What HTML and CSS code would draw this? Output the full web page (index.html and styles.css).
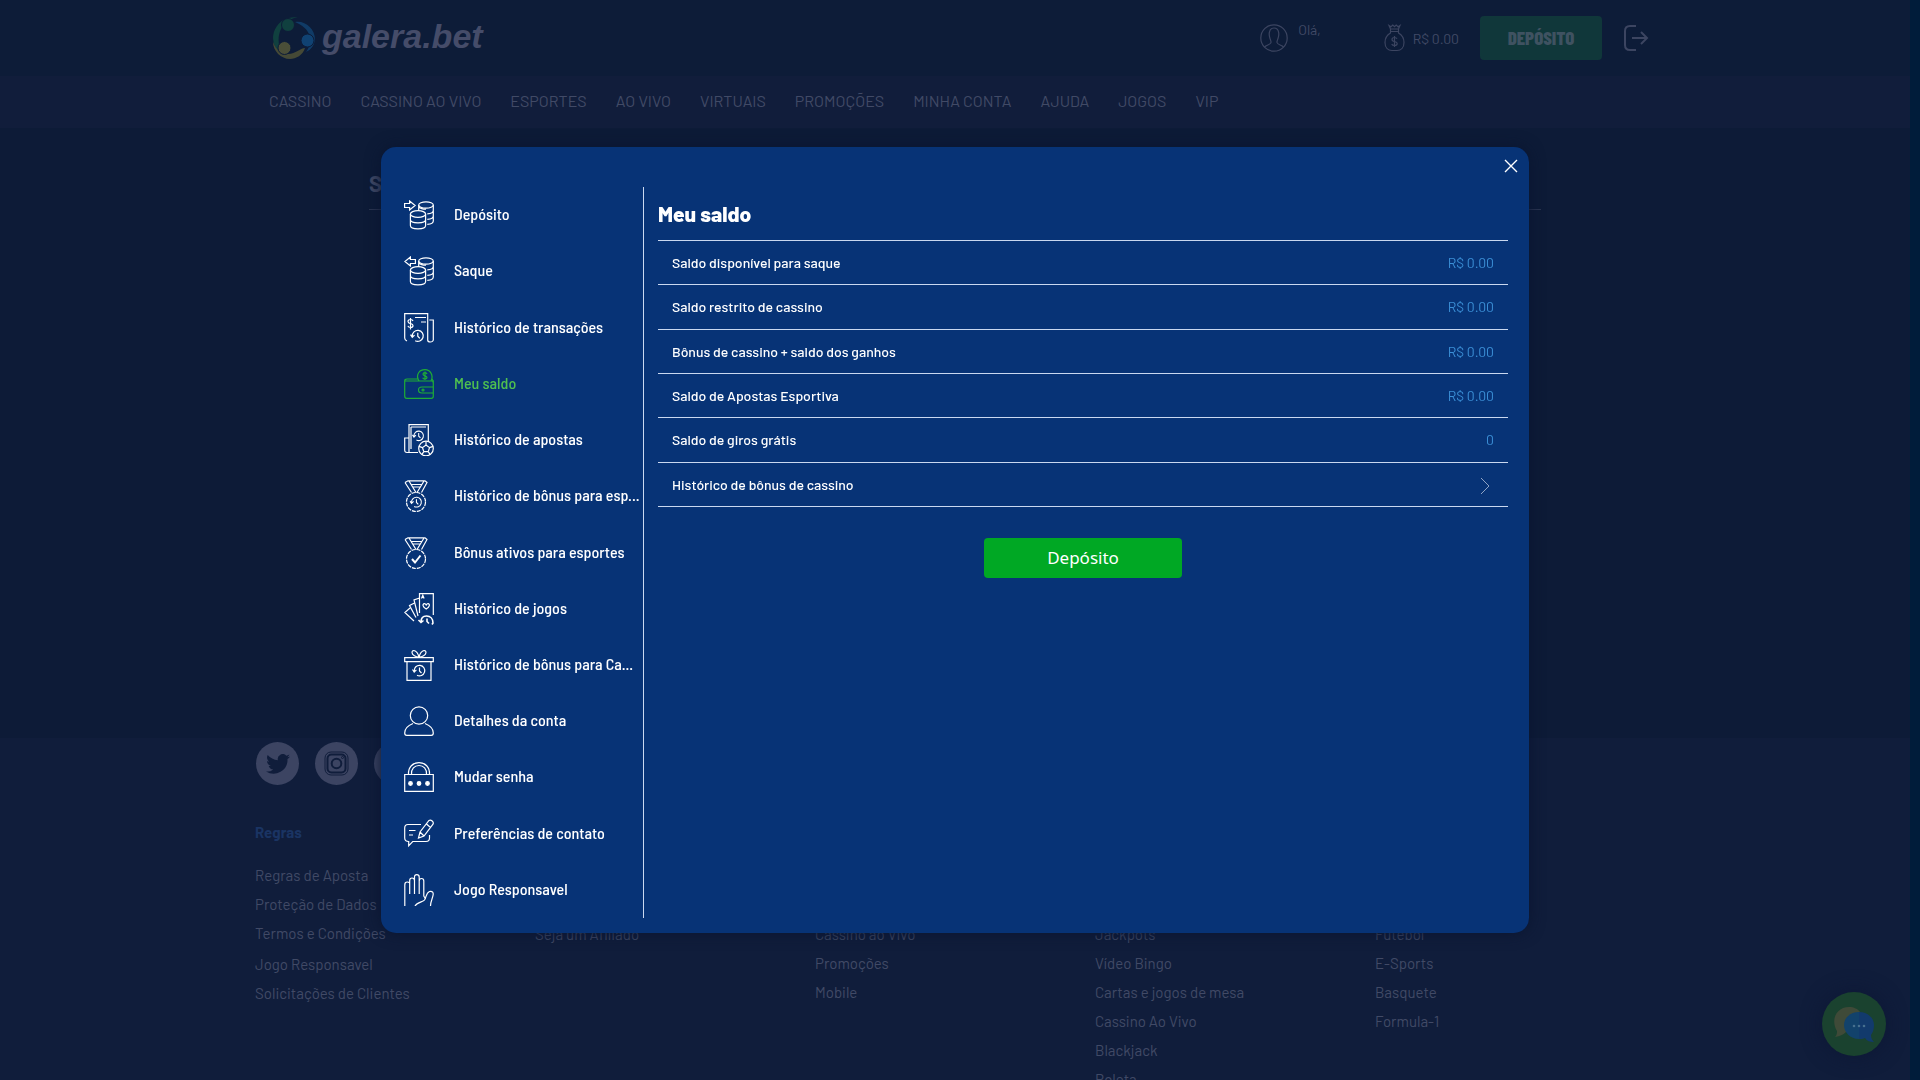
FILE: index.html
```html
<!DOCTYPE html>
<html lang="pt-BR">
<head>
<meta charset="utf-8">
<meta name="viewport" content="width=device-width, initial-scale=1">
<title>galera.bet - Meu saldo</title>
<link rel="stylesheet" href="styles.css">
</head>
<body>
<svg class="sprite" aria-hidden="true">
  <symbol id="coins" viewBox="0 0 30 30">
    <ellipse cx="22" cy="5" rx="7.3" ry="3.2"/>
    <path d="M14.7 5v6M29.3 5v16c0 2-2.5 3.200-6 3.400M29.300 10.500c0 2-2.500 3.200-6 3.400M29.300 16c0 2-2.500 3.200-6 3.400M15 7c1.500 1.600 4 2.200 7 2.200"/>
    <ellipse cx="14" cy="14" rx="7.600" ry="3.400"/>
    <path d="M6.400 14v11.500c0 4.500 15.200 4.500 15.200 0V14M6.400 19.500c0 4.500 15.200 4.500 15.200 0"/>
  </symbol>
  <symbol id="clock" viewBox="0 0 14 14">
    <path d="M2.200 7.500A5.300 5.300 0 1 1 5 11.800M.5 6l1.700 2.500L4.400 6.400M7.500 4v3.500l2 2"/>
  </symbol>
  <symbol id="ribbon" viewBox="0 0 30 32">
    <path d="M1 2.500 4 .8h17l2 1.700-5.500 10M1 2.500l6.500 10M5 1l7 11.500M20 1l-7 11.500M7 4.500h11M8.500 7h8"/>
    <circle cx="12" cy="22" r="9.500" stroke-dasharray="4 1"/>
  </symbol>
</svg>

<div class="page">
  <header class="header">
    <div class="container header-row">
      <a class="logo" href="#">
        <svg width="42" height="42" viewBox="0 0 42 42" aria-hidden="true">
          <path fill="#10403f" d="M25 .600A21 21 0 0 0 3 32c2 3 4 4 6 5C5 29 3 16 12 6c3-3 8-5 13-5.400z"/>
          <circle cx="15" cy="8" r="6.500" fill="#10403f" stroke="#0d1c38"/>
          <path fill="#103b66" d="M22 5c10-2 20 7 20 17-.4 6-4 11-9 13 3-4 5-9 4-15-2-8-8-12-15-15z"/>
          <circle cx="34.500" cy="23.500" r="6.500" fill="#104272" stroke="#0d1c38"/>
          <path fill="#454936" d="M0 25c3 8 8 12 15 12 8 0 12-6 17-6-2 7-9 11-15 11C8 42 0 34 0 25z"/>
          <circle cx="11.500" cy="31" r="6.500" fill="#4a4e38" stroke="#0d1c38"/>
        </svg>
        <span>galera.bet</span>
      </a>
      <div class="account">
        <div class="greeting">
          <svg class="line" width="28" height="28" viewBox="0 0 28 28" aria-hidden="true"><circle cx="14" cy="14" r="13.200"/><path d="M4.500 23c2-2.300 6-2 6.500-4.500.2-1.500-.5-2.500-1-4C9 12 8 4 14 4s5 8 4 10.500c-.5 1.500-1.200 2.500-1 4 .5 2.500 4.500 2.200 6.500 4.500"/></svg>
          <span>Olá,</span>
        </div>
        <div class="balance">
          <svg class="line" width="21" height="28" viewBox="0 0 21 28" aria-hidden="true"><path d="M6.500 5 5 1.500l2 1.200L8.800 1l1.700 1.700L12.200 1 14 2.700l2-1.200L14.500 5zM6 7.500h9M6.500 5v4C3 11 1 14.500 1 18.500c0 5 3 8 7 8h5c4 0 7-3 7-8 0-4-2-7.500-5.500-9.500V5M13 14.800c-.5-1-1.400-1.300-2.500-1.300-1.500 0-2.500.8-2.500 2 0 3 5.200 1.200 5.200 4 0 1.400-1.200 2-2.700 2s-2.400-.5-2.800-1.500M10.500 12v11"/></svg>
          <span>R$ 0.00</span>
        </div>
        <button class="header-deposit" type="button">DEPÓSITO</button>
        <button class="icon-button" type="button" aria-label="Sair">
          <svg class="line line-bold" width="26" height="28" viewBox="0 0 26 28" aria-hidden="true"><path d="M13 2H7Q2 2 2 7v14q0 5 5 5h6M9 14h15M18 8l6 6-6 6"/></svg>
        </button>
      </div>
    </div>
  </header>

  <nav class="nav" aria-label="Principal">
    <div class="container nav-row">
      <a href="#">CASSINO</a><a href="#">CASSINO AO VIVO</a><a href="#">ESPORTES</a><a href="#">AO VIVO</a><a href="#">VIRTUAIS</a><a href="#">PROMOÇÕES</a><a href="#">MINHA CONTA</a><a href="#">AJUDA</a><a href="#">JOGOS</a><a href="#">VIP</a>
    </div>
  </nav>

  <main class="main">
    <h1 class="main-title">Saldo</h1>
  </main>

  <footer class="footer">
    <div class="container">
      <div class="social">
        <a href="#" aria-label="Twitter"><svg width="24" height="20" viewBox="0 0 24 20" aria-hidden="true"><path fill="#101d3b" d="M24 2.400c-.9.400-1.800.700-2.800.800 1-.6 1.800-1.600 2.200-2.700-1 .6-2 1-3.100 1.200A4.900 4.900 0 0 0 11.900 6.200C7.800 6 4.200 4.100 1.700 1.100.4 3.300 1.100 6.200 3.200 7.600c-.8 0-1.600-.2-2.200-.6 0 2.300 1.600 4.400 3.900 4.900-.7.200-1.500.200-2.200.1.600 2 2.400 3.400 4.600 3.400A9.900 9.900 0 0 1 0 17.500 14 14 0 0 0 21.500 5c1-.7 1.800-1.600 2.500-2.600z"/></svg></a>
        <a href="#" aria-label="Instagram"><svg width="25" height="25" viewBox="0 0 25 25" fill="none" stroke="#101d3b" aria-hidden="true"><rect x="1" y="1" width="23" height="23" rx="6"/><rect x="3.500" y="3.500" width="18" height="18" rx="4" stroke-width="2"/><circle cx="12.500" cy="12.500" r="4.800" stroke-width="2"/><circle cx="18.500" cy="6.500" r="1"/></svg></a>
        <a href="#" aria-label="Facebook"></a>
      </div>
      <div class="footer-columns">
        <section>
          <h2>Regras</h2>
          <ul>
            <li><a href="#">Regras de Aposta</a></li>
            <li><a href="#">Proteção de Dados</a></li>
            <li><a href="#">Termos e Condições</a></li>
          </ul>
          <ul class="footer-group">
            <li><a href="#">Jogo Responsavel</a></li>
            <li><a href="#">Solicitações de Clientes</a></li>
          </ul>
        </section>
        <ul class="footer-lower">
          <li><a href="#">Seja um Afiliado</a></li>
        </ul>
        <ul class="footer-lower">
          <li><a href="#">Cassino ao Vivo</a></li>
          <li><a href="#">Promoções</a></li>
          <li><a href="#">Mobile</a></li>
        </ul>
        <ul class="footer-lower">
          <li><a href="#">Jackpots</a></li>
          <li><a href="#">Vídeo Bingo</a></li>
          <li><a href="#">Cartas e jogos de mesa</a></li>
          <li><a href="#">Cassino Ao Vivo</a></li>
          <li><a href="#">Blackjack</a></li>
          <li><a href="#">Roleta</a></li>
        </ul>
        <ul class="footer-lower">
          <li><a href="#">Futebol</a></li>
          <li><a href="#">E-Sports</a></li>
          <li><a href="#">Basquete</a></li>
          <li><a href="#">Formula-1</a></li>
        </ul>
      </div>
    </div>
  </footer>
</div>

<button class="chat" type="button" aria-label="Chat">
  <svg width="42" height="38" viewBox="0 0 42 38" aria-hidden="true"><path fill="#3f4a38" d="M2 32c2-2 2-4 2-6C-3 14 4 2 16 2c5 0 9 2 11 5v20H13c-3 3-6 4-11 5z"/><path fill="#12426b" d="M26 7C17 7 11 13 11 20s6 14 15 14z"/><path fill="#123a6c" d="M26 7c9 0 15 6 15 13 0 4-1 7-3 10 0 3 1 5 3 7-4 0-7-1-9-4-2 1-4 1-6 1z"/><g fill="#46708f"><circle cx="21" cy="21" r="1.300"/><circle cx="26" cy="21" r="1.300"/><circle cx="31" cy="21" r="1.300"/></g></svg>
</button>

<div class="overlay">
  <div class="modal" role="dialog" aria-label="Meu saldo">
    <button class="close" type="button" aria-label="Fechar"><svg width="14" height="14" viewBox="0 0 14 14" aria-hidden="true"><path d="M1 1l12 12M13 1 1 13"/></svg></button>
    <div class="modal-body">
      <nav class="menu" aria-label="Conta">
        <a href="#"><svg viewBox="0 0 30 30"><path d="M.6 3.500h5V1l5.500 4.500L5.600 10V7.500h-5z"/><use href="#coins"/></svg><span>Depósito</span></a>
        <a href="#"><svg viewBox="0 0 30 30"><path d="M11.400 3.500h-5V1L.9 5.500 6.400 10V7.500h5z"/><use href="#coins"/></svg><span>Saque</span></a>
        <a href="#"><svg viewBox="0 0 30 30"><path d="M3 28Q.7 27 .7 25V.7h23V27q0 2 2.600 2t3-2V7h-4M9 8c-.4-1.200-1.300-1.500-2.400-1.500C5 6.500 4 7.300 4 8.500c0 3 5 1.300 5 4 0 1.300-1 2-2.400 2-1.500 0-2.400-.6-2.700-1.700M6.500 5v11.500M11 4.500h11M17 9h5"/><use href="#clock" x="6" y="15.500" width="14.500" height="14.500"/></svg><span>Histórico de transações</span></a>
        <a href="#" class="active" aria-current="page"><svg viewBox="0 0 30 30"><path d="M14 10H3q-2.300 0-2.300 2v15q0 2.300 2 2.300h24.600q2 0 2-2V14q0-2-2-2H3q-2.300 0-2.300-1M29.300 18H18q-3.500 0-3.500 3t3.500 3h11.300M15 12C11 5 16 .7 21 .7S30 6 27 12M23 5c-.4-1-1-1.300-2-1.300-1.300 0-2 .6-2 1.500 0 2.200 4 1.200 4 3.300 0 1-.8 1.500-2 1.500s-2-.5-2.300-1.300M21 2.500V11M28 10l1.300 2v2"/><circle cx="19" cy="21" r="1"/></svg><span>Meu saldo</span></a>
        <a href="#"><svg class="tall" viewBox="0 0 30 32"><path d="M5 28.500V.7h19.300V17M14 28.500H3Q.7 28.500.7 26V14H5M7 3h15M7 3v22"/><use href="#clock" x="8" y="5.500" width="12.500" height="12.500"/><circle cx="22" cy="24.500" r="7.300"/><path d="m22 21 3.500 2.600-1.300 4h-4.400l-1.300-4zM22 21v-3.500M25.500 23.600l3.500-1.200M24.200 27.600l2 3M19.800 27.600l-2 3M18.500 23.600 15 22.400"/></svg><span>Histórico de apostas</span></a>
        <a href="#"><svg class="tall" viewBox="0 0 30 32"><use href="#ribbon"/><use href="#clock" x="5.500" y="15.500" width="13" height="13"/></svg><span>Histórico de bônus para esp...</span></a>
        <a href="#"><svg class="tall" viewBox="0 0 30 32"><use href="#ribbon"/><path stroke-width="2" d="m8 22 3 3.500 5.500-7"/></svg><span>Bônus ativos para esportes</span></a>
        <a href="#"><svg class="tall" viewBox="0 0 30 32"><path d="M15.500 20V.7h13.800V22M15.500 5 10 7l4 16M10.500 10 5.500 12.500l6.500 12M6 15 .8 19.500 10 28M17.500 5.500l1.300-3.200 1.300 3.200M18 4.500h1.800M22.200 16c-4-2.500-3.700-5-2-5.300 1.200-.2 2 1.300 2 1.300s.8-1.500 2-1.300c1.700.3 2 2.800-2 5.300z"/><path stroke-width="1.600" d="M17 29c0-5 3-6 5.500-6 4 0 6.500 3 6.500 7l-1 1.500M14.500 27l2.500 2.500 2.500-2M23 25.500v3l2 2"/></svg><span>Histórico de jogos</span></a>
        <a href="#"><svg class="tall" viewBox="0 0 30 32"><path d="M.7 8.700h28.600v4H.7zM3 12.700v18.600h24V12.700M15 8c-2-7-7-8-7-4.500C8 6 12 8 15 8zM15 8c2-7 7-8 7-4.500C22 6 18 8 15 8z"/><use href="#clock" x="8" y="14.500" width="14" height="14"/></svg><span>Histórico de bônus para Ca...</span></a>
        <a href="#"><svg viewBox="0 0 30 30"><circle cx="15" cy="9.500" r="8.700"/><path d="M9 17.500c-5 2-8.300 5-8.300 9.500q0 2.300 2 2.300h24.600q2 0 2-2.300c0-4.500-3.300-7.500-8.300-9.500"/></svg><span>Detalhes da conta</span></a>
        <a href="#"><svg viewBox="0 0 30 30"><path d="M.7 12.500h28.600v16.800H.7zM4.500 12.500C4 5 9 .7 15 .7S26 5 25.500 12.500M7.500 12.500C7 7 10.500 3.500 15 3.500s8 3.500 7.500 9"/><g class="solid"><circle cx="6.500" cy="21.500" r="1.800"/><circle cx="15" cy="21.500" r="1.800"/><circle cx="23.500" cy="21.500" r="1.800"/></g></svg><span>Mudar senha</span></a>
        <a href="#"><svg viewBox="0 0 30 30"><path d="M17 5.500H4Q.7 5.500.7 9v10q0 3.500 4 3.500v4.300l4-4.300H22q3.500 0 3.500-3.500v-3M5 11.500h6.500M5 16h4M14.500 19l1.500-6L25 1.500q1.500-1 3.200.5t.8 3.200L20 17zM16 13l4 4M22.500 5l4 3.500"/></svg><span>Preferências de contato</span></a>
        <a href="#"><svg class="tall" viewBox="0 0 30 32"><path d="M.8 32V11q0-3 2.500-3T5.700 10v10M5.700 11V6.500Q5.700 4 8 4t2.500 2.500V20M10.500 7V3q0-2.300 2.300-2.300T15.200 3v17M15.200 7q0-2.500 2.300-2.500t2.300 2.500v15q1 2 2 3M11 32c2-4 8-4 9.500-6 2-3 1.500-7 5-8.500 3-.5 4.200 1 3.500 4-.5 3-2.500 6-2.500 10.500"/></svg><span>Jogo Responsavel</span></a>
      </nav>
      <section class="content">
        <h2 class="content-title">Meu saldo</h2>
        <table class="balances">
          <tbody>
            <tr><th scope="row">Saldo disponível para saque</th><td>R$ 0.00</td></tr>
            <tr><th scope="row">Saldo restrito de cassino</th><td>R$ 0.00</td></tr>
            <tr><th scope="row">Bônus de cassino + saldo dos ganhos</th><td>R$ 0.00</td></tr>
            <tr><th scope="row">Saldo de Apostas Esportiva</th><td>R$ 0.00</td></tr>
            <tr><th scope="row">Saldo de giros grátis</th><td>0</td></tr>
            <tr><th scope="row"><a href="#">Histórico de bônus de cassino</a></th><td><svg class="chevron" width="18" height="18" viewBox="0 0 18 18" aria-hidden="true"><path d="m5 1 8 8-8 8"/></svg></td></tr>
          </tbody>
        </table>
        <button class="deposit" type="button">Depósito</button>
      </section>
    </div>
  </div>
</div>
</body>
</html>
```
FILE: styles.css
```css
* {
  box-sizing: border-box;
}

html {
  background: #001c3a;
}

body {
  margin: 0;
  height: 100vh;
  overflow: hidden;
  font-family: Barlow, Roboto, "Liberation Sans", sans-serif;
  font-size: 16px;
  color: #414a66;
}

a {
  color: inherit;
  text-decoration: none;
}

button {
  font-family: inherit;
  border: 0;
  padding: 0;
  cursor: pointer;
}

ul {
  list-style: none;
  margin: 0;
  padding: 0;
}

.sprite {
  display: none;
}

.page {
  margin-right: 10px;
  background: #0d1b37;
}

.container {
  max-width: 1400px;
  margin: 0 auto;
}

.header {
  background: #0d1c38;
}

.header-row {
  display: flex;
  align-items: center;
  justify-content: space-between;
  height: 76px;
  padding: 0 6px 0 18px;
}

.logo {
  display: flex;
  align-items: center;
  gap: 7px;
  font: italic bold 34px/40px "Liberation Sans", sans-serif;
  color: #454c69;
}

.logo span {
  padding-bottom: 4px;
}

.account {
  display: flex;
  align-items: center;
  gap: 21px;
}

.greeting {
  display: flex;
  gap: 10px;
  margin-right: 42px;
  line-height: 12px;
}

.balance {
  display: flex;
  align-items: center;
  gap: 8px;
}

.balance span,
.greeting span {
  font-size: 14px;
}

.line {
  fill: none;
  stroke: #3c4561;
  stroke-width: 1.2;
}

.line-bold {
  stroke-width: 2;
}

.header-deposit {
  width: 122px;
  height: 44px;
  border-radius: 4px;
  background: #10373a;
  color: #3f5261;
  font: 800 19px/24px "Barlow Condensed", "Liberation Sans Narrow", sans-serif;
}

.icon-button {
  display: flex;
  background: none;
}

.nav {
  background: #111d3b;
}

.nav-row {
  display: flex;
  align-items: center;
  gap: 29px;
  height: 52px;
  padding: 0 14px 4px;
}

.main {
  max-width: 1172px;
  min-height: 610px;
  margin: 0 auto;
  padding-top: 40px;
}

.main-title {
  margin: 0;
  padding-bottom: 11px;
  border-bottom: 1px solid #2b3551;
  font-size: 22px;
  line-height: 30px;
}

.footer {
  padding-top: 4px;
  background: #101d3b;
}

.social {
  display: flex;
  gap: 16px;
  padding-left: 1px;
}

.social a {
  display: flex;
  align-items: center;
  justify-content: center;
  width: 43px;
  height: 43px;
  border-radius: 50%;
  background: #3c4462;
}

.footer-columns {
  display: grid;
  grid-template-columns: repeat(5, 1fr);
  padding-top: 33px;
  font-size: 15px;
  line-height: 29px;
}

.footer h2 {
  margin: 0 0 14px;
  font-size: 15px;
  line-height: 29px;
  color: #1a3463;
}

.footer-group {
  padding-top: 2px;
}

.footer-lower {
  padding-top: 102px;
}

.chat {
  position: fixed;
  right: 34px;
  bottom: 24px;
  display: flex;
  align-items: center;
  justify-content: center;
  width: 64px;
  height: 64px;
  border-radius: 50%;
  background: #1a422f;
  box-shadow: 0 0 20px #0d1735;
}

.overlay {
  position: fixed;
  inset: 0 10px 0 0;
  display: flex;
  align-items: center;
  justify-content: center;
}

.modal {
  display: flex;
  flex-direction: column;
  width: 90%;
  max-width: 1148px;
  padding-bottom: 15px;
  border-radius: 15px;
  background: #073376;
  box-shadow: 0 0 15px #0a1530;
  color: #fff;
}

.close {
  display: flex;
  align-self: flex-end;
  margin: 12px 11px 14px;
  background: none;
}

.close path {
  stroke: #fff;
  stroke-width: 1.4;
}

.modal-body {
  display: flex;
}

.menu {
  display: flex;
  flex-direction: column;
  flex: 0 0 263px;
  min-width: 0;
  height: 731px;
  padding-left: 23px;
  border-right: 1px solid #c9d8f0;
}

.menu a {
  display: flex;
  flex: 1;
  align-items: center;
  gap: 20px;
  font-family: "Barlow Semi Condensed", Barlow, Roboto, sans-serif;
  font-size: 16px;
  font-weight: 500;
}

.menu span {
  padding-bottom: 3px;
  white-space: nowrap;
}

.menu svg {
  flex: none;
  width: 30px;
  height: 30px;
  fill: none;
  stroke: currentColor;
  stroke-width: 1.2;
}

.menu svg.tall {
  height: 32px;
}

.menu .solid {
  fill: currentColor;
}

.menu a.active {
  color: #4fc04f;
}

.menu .active svg {
  stroke: #1fae35;
}

.content {
  display: flex;
  flex: 1;
  flex-direction: column;
  min-width: 0;
  padding: 12px 21px 0 14px;
}

.content-title {
  margin: 0;
  padding-bottom: 11px;
  font-size: 21px;
  font-weight: 800;
  line-height: 30px;
}

.balances {
  width: 100%;
  height: 267px;
  border-collapse: collapse;
}

.balances tr {
  height: 44px;
  border-top: 1px solid #c9d8f0;
  border-bottom: 1px solid #c9d8f0;
}

.balances th,
.balances td {
  padding: 0 14px;
  font-size: 14px;
  font-weight: 500;
  text-align: left;
}

.balances td {
  color: #3b8fd6;
  font-weight: 400;
  text-align: right;
}

.chevron {
  display: block;
  margin: 4px 0 0 auto;
  fill: none;
  stroke: #8fa3c4;
}

.deposit {
  align-self: center;
  width: 198px;
  height: 40px;
  margin-top: 31px;
  border-radius: 4px;
  background: #00a824;
  color: #fff;
  font: 400 17px/24px "Noto Sans", sans-serif;
}
```
